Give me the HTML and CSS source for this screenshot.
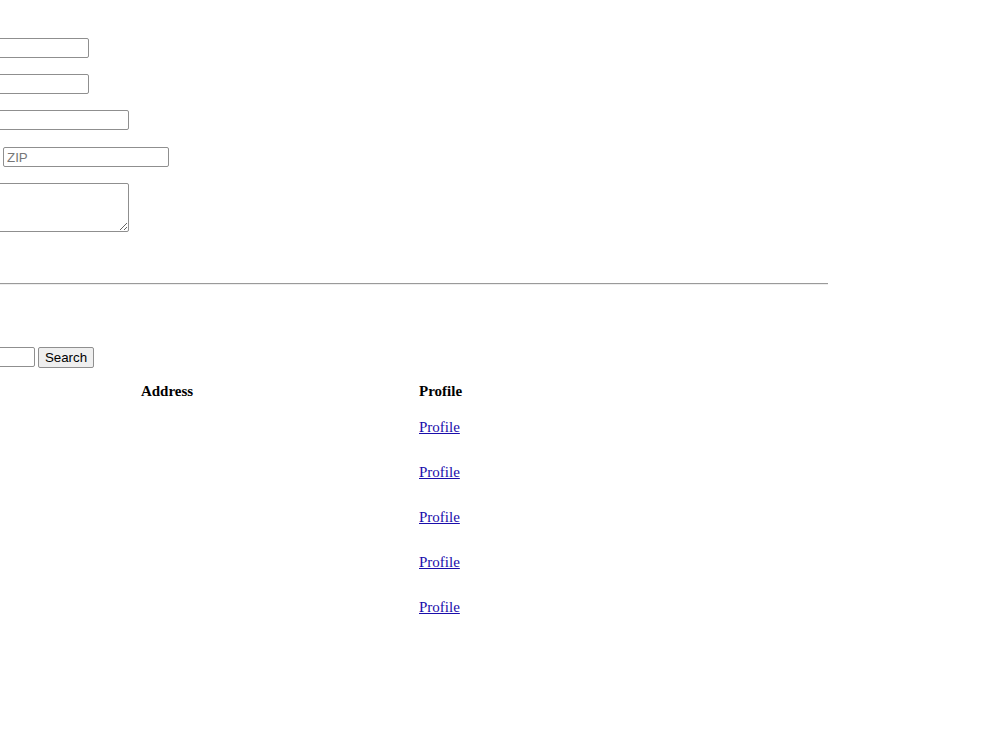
FILE: index.html
```html
<!DOCTYPE html>
<html lang="en">
<head>
  <meta charset="UTF-8" />
  <title>Contacts</title>
  <link rel="stylesheet" href="styles.css">
</head>
<body>
  <div class="page">
    <form class="contact-form">
      <input type="text" class="field short">
      <input type="text" class="field short">
      <input type="text" class="field long">
      <input type="text" class="field zip" placeholder="ZIP">
      <textarea class="field notes"></textarea>
    </form>

    <hr class="divider">

    <form class="search">
      <input type="text" class="search-input">
      <button type="submit">Search</button>
    </form>

    <table class="results">
      <thead>
        <tr>
          <th class="col-address">Address</th>
          <th class="col-profile">Profile</th>
        </tr>
      </thead>
      <tbody>
        <tr><td></td><td><a href="#">Profile</a></td></tr>
        <tr><td></td><td><a href="#">Profile</a></td></tr>
        <tr><td></td><td><a href="#">Profile</a></td></tr>
        <tr><td></td><td><a href="#">Profile</a></td></tr>
        <tr><td></td><td><a href="#">Profile</a></td></tr>
      </tbody>
    </table>
  </div>
</body>
</html>
```

FILE: styles.css
```css
body {
  margin: 0;
  background: #fff;
  font-family: 'Liberation Serif', serif;
  font-size: 16px;
  overflow: hidden;
}

.page {
  margin-left: -100px;
  padding-top: 38px;
}

.contact-form {
  display: flex;
  flex-direction: column;
  align-items: flex-start;
}

.field {
  box-sizing: border-box;
  height: 20px;
  padding: 1px 3px;
  border: 1px solid #8f8f8f;
  border-radius: 2px;
  font-family: 'Liberation Sans', Arial, sans-serif;
  font-size: 13.33px;
  margin: 0 0 16px 0;
}

.field::placeholder {
  color: #777;
}

.short {
  width: 189px;
}

.long {
  width: 229px;
  margin-bottom: 17px;
}

.zip {
  width: 166px;
  margin-left: 103px;
}

.notes {
  width: 229px;
  height: 49px;
  resize: vertical;
  margin-bottom: 0;
}

.divider {
  width: 928px;
  margin: 51px 0 0 0;
  border: none;
  border-top: 1px solid #9a9a9a;
  border-bottom: 1px solid #eee;
}

.search {
  display: flex;
  gap: 3px;
  margin-top: 62px;
}

.search-input {
  box-sizing: border-box;
  width: 135px;
  height: 20px;
  border: 1px solid #8f8f8f;
  border-radius: 2px;
  font-family: 'Liberation Sans', Arial, sans-serif;
  font-size: 13.33px;
}

.search button {
  box-sizing: border-box;
  width: 56px;
  height: 21px;
  padding: 0;
  background: #efefef;
  border: 1px solid #8f8f8f;
  border-radius: 2px;
  font-family: 'Liberation Sans', Arial, sans-serif;
  font-size: 13.33px;
  color: #000;
}

.results {
  margin: 8px 0 0 15px;
  border-spacing: 0;
  font-size: 15px;
}

.results th {
  height: 29px;
  padding: 0;
  font-weight: bold;
  line-height: 18px;
}

.col-address {
  width: 504px;
  text-align: center;
}

.col-profile {
  text-align: left;
}

.results td {
  height: 45px;
  padding: 0;
  vertical-align: middle;
}

.results a {
  color: #1a0dab;
}
```
